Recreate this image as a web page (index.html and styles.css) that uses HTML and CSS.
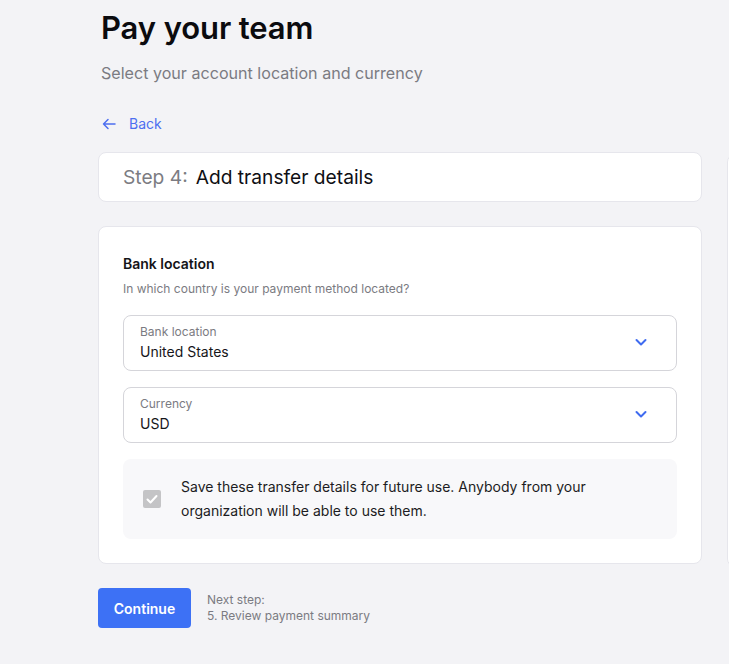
FILE: index.html
```html
<!DOCTYPE html>
<html>
<head>
<meta charset="utf-8">
<link rel="stylesheet" href="styles.css">
</head>
<body>
<div class="page">
  <main class="main">
    <h1 class="title">Pay your team</h1>
    <p class="subtitle">Select your account location and currency</p>
    <a class="back" href="#">
      <svg width="16" height="16" viewBox="0 0 16 16" fill="none" stroke="currentColor" stroke-width="1.5" stroke-linecap="round" stroke-linejoin="round"><path d="M14 8H2.5M7 3.5L2.5 8 7 12.5"/></svg>
      <span>Back</span>
    </a>
    <section class="card step-card">
      <span class="step-num">Step 4:</span>
      <span class="step-name">Add transfer details</span>
    </section>
    <section class="card form-card">
      <h2 class="section-title">Bank location</h2>
      <p class="section-desc">In which country is your payment method located?</p>
      <div class="select">
        <div class="select-text">
          <span class="select-label">Bank location</span>
          <span class="select-value">United States</span>
        </div>
        <svg class="chev" width="14" height="14" viewBox="0 0 14 14" fill="none" stroke="currentColor" stroke-width="2" stroke-linecap="round" stroke-linejoin="round"><path d="M2.5 5l4.5 4.5L11.5 5"/></svg>
      </div>
      <div class="select">
        <div class="select-text">
          <span class="select-label">Currency</span>
          <span class="select-value">USD</span>
        </div>
        <svg class="chev" width="14" height="14" viewBox="0 0 14 14" fill="none" stroke="currentColor" stroke-width="2" stroke-linecap="round" stroke-linejoin="round"><path d="M2.5 5l4.5 4.5L11.5 5"/></svg>
      </div>
      <div class="save-box">
        <span class="checkbox">
          <svg width="14" height="14" viewBox="0 0 14 14" fill="none" stroke="#fff" stroke-width="2" stroke-linecap="round" stroke-linejoin="round"><path d="M2.5 7.5l3 3 6-6.5"/></svg>
        </span>
        <p class="save-text">Save these transfer details for future use. Anybody from your organization will be able to use them.</p>
      </div>
    </section>
    <div class="actions">
      <button class="btn">Continue</button>
      <div class="next">
        <span>Next step:</span>
        <span>5. Review payment summary</span>
      </div>
    </div>
  </main>
  <aside class="side"></aside>
</div>
</body>
</html>
```

FILE: styles.css
```css
* { box-sizing: border-box; }
html, body { margin: 0; padding: 0; }
body {
  background: #f3f3f6;
  font-family: Inter, "Noto Sans", sans-serif;
  color: #111;
  height: 664px;
  overflow: hidden;
}
.page {
  display: flex;
  align-items: flex-start;
  padding-left: 98px;
  width: 729px;
  height: 664px;
  overflow: hidden;
}
.main {
  width: 604px;
  flex-shrink: 0;
}
.side {
  margin-left: 25px;
  margin-top: 154px;
  width: 300px;
  height: 413px;
  background: #fff;
  border: 1px solid #e6e6ec;
  border-radius: 8px;
  flex-shrink: 0;
}
.title {
  margin: 9px 0 0 3px;
  font-size: 31px;
  line-height: 38px;
  font-weight: 600;
  color: #0b0b0f;
  letter-spacing: -0.1px;
}
.subtitle {
  margin: 15px 0 0 3px;
  font-size: 16.1px;
  line-height: 22px;
  color: #7b7b82;
}
.back {
  display: flex;
  align-items: center;
  gap: 12px;
  margin: 30px 0 0 3px;
  color: #4d6ff0;
  text-decoration: none;
  font-size: 14px;
  line-height: 20px;
}
.card {
  background: #fff;
  border: 1px solid #e6e6ec;
  border-radius: 8px;
}
.step-card {
  margin-top: 18px;
  height: 50px;
  display: flex;
  align-items: center;
  padding: 0 24px;
  font-size: 19.2px;
  gap: 8px;
}
.step-num { color: #7c7c82; }
.step-name { color: #0f0f14; }
.form-card {
  margin-top: 24px;
  padding: 28px 24px 24px;
}
.section-title {
  margin: 0;
  font-size: 14px;
  line-height: 18px;
  font-weight: 600;
  color: #141418;
}
.section-desc {
  margin: 8px 0 0;
  font-size: 12px;
  line-height: 16px;
  color: #7b7b82;
}
.select {
  margin-top: 18px;
  height: 56px;
  border: 1px solid #d5d5da;
  border-radius: 8px;
  display: flex;
  align-items: center;
  justify-content: space-between;
  padding: 0 28px 0 16px;
}
.select + .select { margin-top: 16px; }
.select-text {
  display: flex;
  flex-direction: column;
  margin-top: 0;
}
.select-label {
  font-size: 12px;
  line-height: 16px;
  color: #7b7b82;
}
.select-value {
  font-size: 14px;
  line-height: 20px;
  margin-top: 2px;
  color: #16161a;
}
.chev { color: #3f6bf0; margin-top: -2px; }
.save-box {
  margin-top: 16px;
  background: #f8f8fa;
  border-radius: 8px;
  display: flex;
  align-items: center;
  padding: 16px 20px;
  gap: 20px;
}
.checkbox {
  width: 18px;
  height: 18px;
  background: #c4c4c6;
  border-radius: 2px;
  display: flex;
  align-items: center;
  justify-content: center;
  flex-shrink: 0;
}
.save-text {
  margin: 0;
  font-size: 14px;
  line-height: 24px;
  color: #1c1c22;
}
.actions {
  margin-top: 24px;
  display: flex;
  align-items: center;
  gap: 16px;
}
.btn {
  background: #3d71f5;
  color: #fff;
  border: none;
  border-radius: 4px;
  height: 40px;
  width: 93px;
  font-family: inherit;
  font-size: 14px;
  font-weight: 600;
}
.next {
  display: flex;
  flex-direction: column;
  font-size: 12px;
  line-height: 16px;
  color: #7b7b82;
}
```
